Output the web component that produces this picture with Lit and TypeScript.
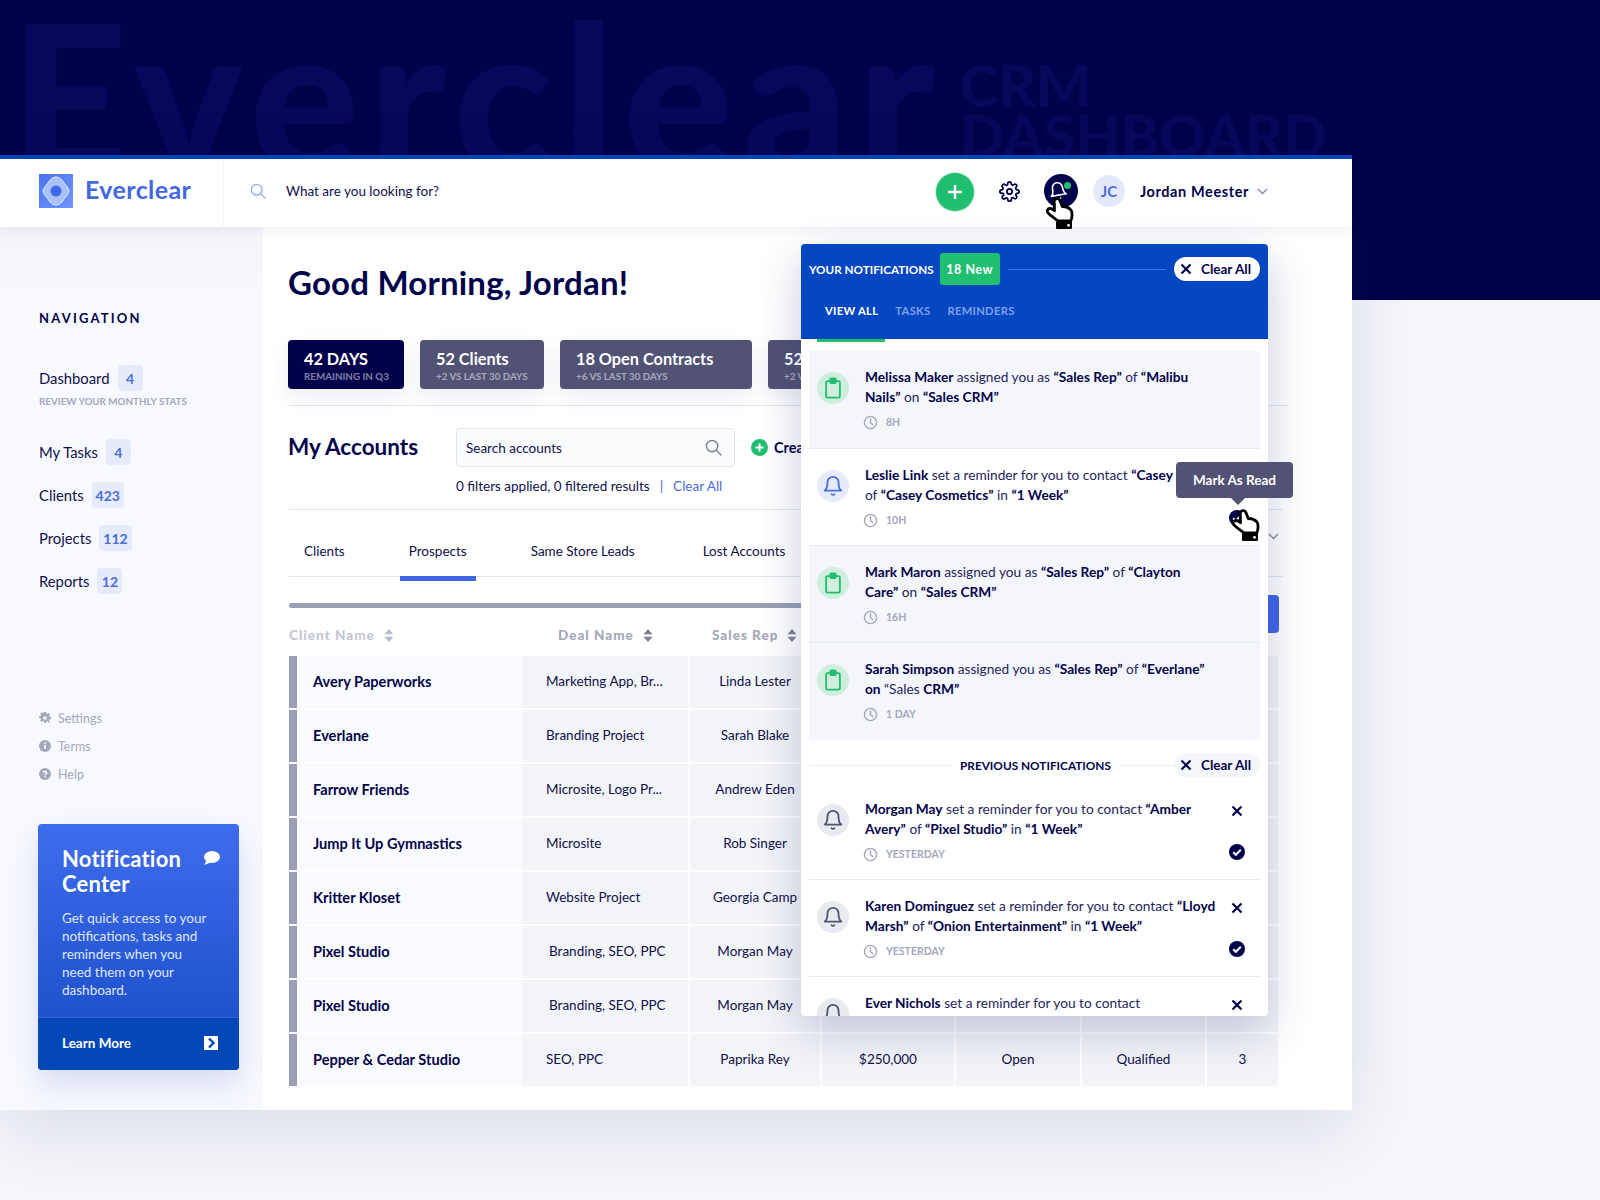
import { LitElement, html, css } from "lit";
import { customElement } from "lit/decorators.js";

const bell = (c: string, s = 22) => html`<svg width=${s} height=${s} viewBox="0 0 24 24" fill="none" stroke=${c} stroke-width="2" stroke-linecap="round" stroke-linejoin="round"><path d="M18 8a6 6 0 0 0-12 0c0 7-3 9-3 9h18s-3-2-3-9"/><path d="M10.5 21a2 2 0 0 0 3 0"/></svg>`;
const clip = html`<svg width="22" height="22" viewBox="0 0 24 24" fill="none" stroke="#20bf6f" stroke-width="2" stroke-linejoin="round"><rect x="4.5" y="4.5" width="15" height="18" rx="1.5"/><rect x="9" y="1.5" width="6" height="5" rx="1" fill="#20bf6f"/></svg>`;
const clock = html`<svg width="15" height="15" viewBox="0 0 16 16" fill="none" stroke="#a5a7bb" stroke-width="1.5" stroke-linecap="round"><circle cx="8" cy="8" r="6.5"/><path d="M8 4v4.3l2.4 2"/></svg>`;
const cross = (s = 12, c = "#02024a") => html`<svg width=${s} height=${s} viewBox="0 0 12 12" fill="none" stroke=${c} stroke-width="2.2"><path d="M1.5 1.5l9 9M10.5 1.5l-9 9"/></svg>`;
const check = html`<svg width="16" height="16" viewBox="0 0 16 16"><circle cx="8" cy="8" r="8" fill="#02024a"/><path d="M4.2 8.2l2.6 2.6 5-5" fill="none" stroke="#fff" stroke-width="2"/></svg>`;
const sort = (c: string) => html`<svg width="10" height="13" viewBox="0 0 10 13" fill=${c}><path d="M5 0l4.5 5.3H.5zM5 13L.5 7.7h9z"/></svg>`;
const magnifier = (c: string, s: number) => html`<svg width=${s} height=${s} viewBox="0 0 18 18" fill="none" stroke=${c} stroke-width="1.5" stroke-linecap="round"><circle cx="7.5" cy="7.5" r="6"/><path d="M12 12l5 5"/></svg>`;
const hand = html`<svg width="30" height="32" viewBox="0 0 30 32"><path d="M10 2.500c1.500-1.500 4-1 4.800.8l2.500 6.200c3.200 0 7 1.300 9 4 1.200 3 .8 7-.5 10.500H13c-3-2.500-8-5.500-10.300-8.500-1.200-2 .3-4.200 2.500-4 1.500.2 3 1 4.300 2.200L9.300 6c-.3-1.300-.2-2.500.7-3.500z" fill="#fff" stroke="#000" stroke-width="2.800" stroke-linejoin="round"/><rect x="11" y="24" width="16" height="8" rx="1" fill="#000"/><circle cx="23.500" cy="28.300" r="1.400" fill="#fff"/></svg>`;

type Note = { kind: "task" | "bell" | "old"; time: string; body: unknown; tint?: boolean };
const b = (t: string) => html`<b>${t}</b>`;

const fresh: Note[] = [
  { kind: "task", time: "8H", tint: true, body: html`${b("Melissa Maker")} assigned you as ${b("“Sales Rep”")} of ${b("“Malibu")}<br />${b("Nails”")} on ${b("“Sales CRM”")}` },
  { kind: "bell", time: "10H", body: html`${b("Leslie Link")} set a reminder for you to contact ${b("“Casey Miller”")}<br />of ${b("“Casey Cosmetics”")} in ${b("“1 Week”")}` },
  { kind: "task", time: "16H", tint: true, body: html`${b("Mark Maron")} assigned you as ${b("“Sales Rep”")} of ${b("“Clayton")}<br />${b("Care”")} on ${b("“Sales CRM”")}` },
  { kind: "task", time: "1 DAY", tint: true, body: html`${b("Sarah Simpson")} assigned you as ${b("“Sales Rep”")} of ${b("“Everlane”")}<br />${b("on")} “Sales ${b("CRM”")}` },
];
const old: Note[] = [
  { kind: "old", time: "YESTERDAY", body: html`${b("Morgan May")} set a reminder for you to contact ${b("“Amber")}<br />${b("Avery”")} of ${b("“Pixel Studio”")} in ${b("“1 Week”")}` },
  { kind: "old", time: "YESTERDAY", body: html`${b("Karen Dominguez")} set a reminder for you to contact ${b("“Lloyd")}<br />${b("Marsh”")} of ${b("“Onion Entertainment”")} in ${b("“1 Week”")}` },
  { kind: "old", time: "YESTERDAY", body: html`${b("Ever Nichols")} set a reminder for you to contact<br />${b("“Amber Avery”")}` },
];

const rows = [
  ["Avery Paperworks", "Marketing App, Br...", "Linda Lester"],
  ["Everlane", "Branding Project", "Sarah Blake"],
  ["Farrow Friends", "Microsite, Logo Pr...", "Andrew Eden"],
  ["Jump It Up Gymnastics", "Microsite", "Rob Singer"],
  ["Kritter Kloset", "Website Project", "Georgia Camp"],
  ["Pixel Studio", "Branding, SEO, PPC", "Morgan May"],
  ["Pixel Studio", "Branding, SEO, PPC", "Morgan May"],
  ["Pepper & Cedar Studio", "SEO, PPC", "Paprika Rey", "$250,000", "Open", "Qualified", "3"],
];

const nav = [["My Tasks", "4"], ["Clients", "423"], ["Projects", "112"], ["Reports", "12"]];

@customElement("app-root")
export class AppRoot extends LitElement {
  static styles = css`
    :host { display: block; height: 1200px; width: 1600px; overflow: hidden; position: relative; background: #f6f7fb; font-family: Lato, "Noto Sans", sans-serif; color: #10104a; font-size: 14px; }
    * { box-sizing: border-box; }
    b { font-weight: 700; color: #02024a; }
    .hero { height: 300px; background: #02024a; color: #08085a; font-weight: 900; }
    .wm { height: 155px; overflow: hidden; display: flex; align-items: flex-start; }
    .mark { font-size: 205px; line-height: 1; margin: -9px 0 0 10px; letter-spacing: 9.500px; white-space: nowrap; }
    .sub { font-size: 58px; line-height: 50px; margin: 60px 0 0 16px; white-space: nowrap; }
    .app { position: relative; width: 1352px; margin-top: -145px; border-top: 4px solid #0447b8; background: #fff; box-shadow: 0 24px 70px rgba(30, 40, 110, .12); }
    .head { height: 68px; padding-bottom: 4px; display: flex; align-items: center; background: #fff; position: relative; z-index: 2; box-shadow: 0 2px 12px rgba(30, 40, 110, .09); }
    .brand { width: 224px; height: 68px; margin-bottom: -4px; padding: 0 0 4px 39px; display: flex; align-items: center; gap: 12px; border-right: 1px solid #f3f4f8; font-size: 25px; font-weight: 700; color: #4268e0; letter-spacing: .4px; }
    .brand span { margin-top: -4px; }
    .find { flex: 1; display: flex; align-items: center; gap: 20px; padding-left: 26px; font-size: 13.500px; color: #10104a; }
    .plus { width: 38px; height: 38px; border-radius: 50%; background: #20bf6f; box-shadow: 0 0 0 1px #c8f0dc; display: flex; align-items: center; justify-content: center; margin-top: 2px; }
    .gear { margin-left: 25px; display: flex; }
    .ring { width: 34px; height: 34px; border-radius: 50%; background: #02024a; margin-left: 24px; display: flex; align-items: center; justify-content: center; position: relative; }
    .ring svg { transform: translateX(-3px) rotate(-10deg); }
    .dot { position: absolute; width: 7px; height: 7px; border-radius: 50%; background: #20bf6f; top: 8px; left: 20px; }
    .avatar { width: 32px; height: 32px; border-radius: 50%; background: #e3e9fb; color: #4a6ddc; font-weight: 700; font-size: 15px; display: flex; align-items: center; justify-content: center; margin-left: 15px; }
    .user { margin-left: 15px; font-weight: 700; font-size: 14.500px; letter-spacing: .6px; color: #02024a; white-space: nowrap; }
    .chev { margin: 0 84px 0 8px; display: flex; }
    .body { display: grid; grid-template-columns: 263px 1089px; height: 883px; }
    .side { background: linear-gradient(#f4f5fa, #f8f9fe 80px); padding: 83px 0 0 39px; display: flex; flex-direction: column; }
    .navt { font-size: 13px; line-height: 16px; font-weight: 700; letter-spacing: 2.200px; color: #02024a; }
    .item { display: flex; align-items: center; gap: 8px; height: 26px; font-size: 14.800px; color: #10104a; }
    .item.first { margin-top: 39px; }
    .tag { min-width: 25px; height: 26px; padding: 0 4px; border-radius: 4px; background: #e6ebfb; color: #4a6ddc; display: flex; align-items: center; justify-content: center; font-size: 14px; font-weight: 700; }
    .hint { font-size: 9.800px; line-height: 12px; margin-top: 4px; font-weight: 700; color: #a5a7bb; white-space: nowrap; }
    .links { margin-top: 32px; display: flex; flex-direction: column; gap: 17px; }
    .foot { margin-top: 110px; display: flex; flex-direction: column; }
    .foot div { height: 28px; display: flex; align-items: center; gap: 7px; font-size: 12.500px; color: #a5a7bb; }
    .promo { margin: 36px 0 0 -1px; width: 201px; height: 246px; border-radius: 4px; overflow: hidden; background: linear-gradient(#3f6cec, #174bc4); box-shadow: 0 14px 30px rgba(30, 60, 160, .15); color: #fff; display: flex; flex-direction: column; }
    .pbody { flex: 1; padding: 22px 0 0 24px; position: relative; }
    .ptitle { font-size: 22px; line-height: 25px; font-weight: 700; letter-spacing: .2px; }
    .pchat { position: absolute; left: 165px; top: 27px; display: flex; }
    .ptext { margin-top: 13px; font-size: 13.500px; line-height: 18px; color: #dfe7fd; }
    .pfoot { height: 53px; background: #0447b8; border-top: 1px solid #2e63d8; padding: 0 21px 3px 24px; display: flex; align-items: center; justify-content: space-between; font-size: 13.500px; font-weight: 700; }
    .main { background: #fff; padding: 35px 64px 0 25px; position: relative; }
    h1 { margin: 0; font-size: 33px; line-height: 40px; font-weight: 700; color: #02024a; letter-spacing: .2px; }
    .stats { margin-top: 38px; display: grid; grid-template-columns: 116px 124px 192px 150px; gap: 16px; }
    .stat { height: 49px; border-radius: 4px; background: #525275; color: #fff; padding: 9px 0 0 16px; white-space: nowrap; overflow: hidden; box-shadow: 0 8px 20px rgba(30, 40, 110, .08); }
    .stat.on { background: #02024a; }
    .stat strong { display: block; font-size: 16.300px; line-height: 20px; font-weight: 700; }
    .stat span { display: block; font-size: 9.800px; line-height: 12px; margin-top: 1px; font-weight: 700; color: rgba(255, 255, 255, .5); }
    .rule { height: 1px; background: #e3e5ec; margin-top: 16px; margin-left: 1px; }
    .acct { margin: 22px 5px 0 0; display: grid; grid-template-columns: 168px 279px auto; }
    h2 { margin: 0; font-size: 22.500px; line-height: 38px; font-weight: 700; color: #02024a; }
    .sbox { height: 39px; border: 1px solid #e3e5ec; border-radius: 4px; background: #fafbfd; padding: 0 12px 0 9px; display: flex; align-items: center; justify-content: space-between; font-size: 13.500px; }
    .create { margin-left: 16px; display: flex; align-items: center; gap: 6px; font-weight: 700; font-size: 14.500px; color: #02024a; white-space: nowrap; }
    .filt { grid-column: 2 / 4; margin-top: 11px; line-height: 16px; font-size: 13.500px; display: flex; gap: 10px; white-space: nowrap; }
    .filt a { color: #4a6ddc; }
    .filt i { font-style: normal; color: #4a6ddc; }
    .tabs { margin: 15px 5px 0 1px; height: 68px; border-top: 1px solid #e3e5ec; border-bottom: 1px solid #e3e5ec; display: flex; gap: 46px; padding-left: 6px; font-size: 13.500px; }
    .tab { height: 71px; padding: 33px 9px 0; line-height: 16px; white-space: nowrap; }
    .tab.on { border-bottom: 5px solid #3f67e0; }
    .tab.end { margin-left: 4px; }
    .bar { margin: 26px 10px 0 1px; height: 5px; border-radius: 3px; background: #9a9fb5; }
    .thead { height: 48px; padding-top: 6px; display: grid; grid-template-columns: 233px 166px 132px; align-items: center; font-size: 13.500px; font-weight: 900; letter-spacing: 1px; color: #a5a7bb; white-space: nowrap; margin-left: 1px; }
    .th { display: flex; align-items: center; gap: 9px; }
    .th.one { color: #c5c7d5; }
    .th.two { padding-left: 36px; }
    .th.three { padding-left: 24px; }
    .grid { display: grid; grid-template-columns: 233px 166px 132px 134px 126px 125px 73px; row-gap: 2px; margin-left: 1px; width: 989px; }
    .cell { height: 52px; padding-bottom: 2px; background: #f3f4f8; background-clip: padding-box; border-left: 2px solid #fff; display: flex; align-items: center; justify-content: center; font-size: 13.500px; white-space: nowrap; }
    .cell.name { background: #fafbfe; border-left: 8px solid #9a9fb5; justify-content: flex-start; padding-left: 16px; font-weight: 700; font-size: 14.600px; color: #02024a; }
    .cell.deal { border-left: 0; justify-content: flex-start; padding-left: 24px; }
    .cell.deal.inset { padding-left: 27px; }
    .ghost { position: absolute; left: 1005px; top: 306px; display: flex; }
    .cta { position: absolute; left: 960px; top: 368px; width: 56px; height: 38px; background: #3f67e8; border-radius: 0 4px 4px 0; }
    .panel { position: absolute; left: 801px; top: 85px; width: 467px; height: 772px; background: #fff; border-radius: 4px; overflow: hidden; box-shadow: 0 16px 44px rgba(30, 40, 110, .24); z-index: 3; }
    .ptop { height: 95px; background: #0447c0; color: #fff; }
    .pline { height: 52px; padding: 0 8px 2px; display: flex; align-items: center; white-space: nowrap; }
    .pname { font-size: 11.700px; font-weight: 700; }
    .pnew { margin-left: 6px; width: 60px; height: 32px; background: #20bf6f; border-radius: 3px; display: flex; align-items: center; justify-content: center; font-size: 12.500px; font-weight: 700; letter-spacing: .5px; }
    .pline hr { flex: 1; border: 0; height: 1px; margin: 0 8px; background: #3f6fe8; }
    .pill { width: 86px; height: 24px; padding-right: 3px; border-radius: 12px; display: flex; align-items: center; justify-content: center; gap: 9px; font-size: 13.500px; font-weight: 700; color: #02024a; background: #fff; white-space: nowrap; }
    .pill.soft { background: #f5f6fb; }
    .ptabs { display: flex; padding: 8px 0 0 24px; gap: 17px; font-size: 11.200px; font-weight: 700; letter-spacing: .3px; color: #7fa0ee; line-height: 14px; }
    .ptabs .on { color: #fff; }
    .pgreen { width: 68px; height: 3px; margin-left: 16px; background: #20bf6f; }
    .list { margin: 9px 8px 0; }
    .note { height: 97px; display: grid; grid-template-columns: 32px 16px 1fr 24px; padding: 16px 11px 0 8px; border-bottom: 1px solid #e8eaf1; position: relative; }
    .note.tint { background: #f5f6fb; }
    .note.top { height: 98px; }
    .note.last { border-bottom: 0; }
    .circle { grid-column: 1; width: 32px; height: 32px; border-radius: 50%; margin-top: 5px; display: flex; align-items: center; justify-content: center; }
    .circle.task { background: #cfeedd; }
    .circle.bell { background: #e6ebfb; }
    .circle.old { background: #e9e9f0; }
    .txt { grid-column: 3; font-size: 13.700px; line-height: 20px; white-space: nowrap; color: #25255c; }
    .when { margin: 8px 0 0 -2px; height: 14px; display: flex; align-items: center; gap: 8px; font-size: 10.500px; font-weight: 700; color: #a5a7bb; }
    .acts { grid-column: 4; display: flex; flex-direction: column; align-items: center; padding-top: 6px; }
    .acts .ok { margin-top: 27px; display: flex; }
    .spacer { height: 12px; }
    .prev { height: 43px; display: flex; align-items: center; padding-top: 7px; }
    .prev hr { flex: 1; border: 0; height: 1px; background: #ecedf3; margin: 0; }
    .prev hr.lead { flex: 0 0 143px; }
    .prev span { padding: 0 8px; font-size: 11.800px; font-weight: 700; color: #02024a; white-space: nowrap; }
    .tip { position: absolute; left: 1176px; top: 303px; width: 117px; height: 36px; background: #525275; border-radius: 4px; color: #fff; font-size: 13.500px; font-weight: 700; display: flex; align-items: center; justify-content: center; z-index: 4; }
    .tip::after { content: ""; position: absolute; left: 55px; top: 36px; border: 7px solid transparent; border-top-color: #525275; border-bottom: 0; }
    .hand { position: absolute; z-index: 5; display: flex; }
    .hand.a { left: 1045px; top: 38px; }
    .hand.b { left: 1231px; top: 350px; }
  `;

  note(n: Note, cls = "") {
    return html`<div class="note ${n.tint ? "tint" : ""} ${cls}">
      <div class="circle ${n.kind}">${n.kind === "task" ? clip : bell(n.kind === "bell" ? "#4a6ddc" : "#525275")}</div>
      <div class="txt">${n.body}<div class="when">${clock}<span>${n.time}</span></div></div>
      ${n.kind === "old" ? html`<div class="acts">${cross()}<div class="ok">${check}</div></div>` : n.time === "10H" ? html`<div class="acts"><div class="spacer"></div><div class="ok">${check}</div></div>` : ""}
    </div>`;
  }

  render() {
    return html`
      <div class="hero"><div class="wm"><div class="mark">Everclear</div><div class="sub">CRM<br />DASHBOARD</div></div></div>
      <div class="app">
        <div class="head">
          <div class="brand">
            <svg width="34" height="34" viewBox="0 0 34 34"><defs><linearGradient id="lg" x1="0" y1="0" x2="1" y2="1"><stop offset="0" stop-color="#4a74ee"/><stop offset="1" stop-color="#6f95ff"/></linearGradient></defs><rect width="34" height="34" fill="url(#lg)"/><path d="M17 3c4 0 6 3 8.500 6.500C28 13 30 15 30 17s-2 4-4.500 7.500C23 28 21 31 17 31s-6-3-8.500-6.500C6 21 4 19 4 17s2-4 4.500-7.500C11 6 13 3 17 3z" fill="#a9c0fa" stroke="#e6edff" stroke-width="1"/><circle cx="17" cy="17" r="5.500" fill="#3f67e8"/></svg>
            <span>Everclear</span>
          </div>
          <div class="find">${magnifier("#8fabec", 16)}<span>What are you looking for?</span></div>
          <div class="plus"><svg width="18" height="18" viewBox="0 0 18 18" stroke="#fff" stroke-width="2.400"><path d="M9 2v14M2 9h14"/></svg></div>
          <div class="gear"><svg width="21" height="21" viewBox="0 0 24 24" fill="none" stroke="#02024a" stroke-width="2" stroke-linejoin="round"><circle cx="12" cy="12" r="3"/><path d="M19.400 15a1.650 1.650 0 0 0 .33 1.820l.06.06a2 2 0 1 1-2.830 2.830l-.06-.06a1.650 1.650 0 0 0-2.820 1.170V21a2 2 0 1 1-4 0v-.09a1.650 1.650 0 0 0-2.820-1.110l-.06.06a2 2 0 1 1-2.830-2.830l.06-.06A1.650 1.650 0 0 0 3 14H3a2 2 0 1 1 0-4h.09a1.650 1.650 0 0 0 1.170-2.820l-.06-.06a2 2 0 1 1 2.830-2.830l.06.06A1.650 1.650 0 0 0 10 3.090V3a2 2 0 1 1 4 0v.09a1.650 1.650 0 0 0 2.820 1.170l.06-.06a2 2 0 1 1 2.830 2.830l-.06.06A1.650 1.650 0 0 0 21 10h0a2 2 0 1 1 0 4h-.09a1.650 1.650 0 0 0-1.510 1z"/></svg></div>
          <div class="ring">${bell("#fff", 20)}<span class="dot"></span></div>
          <div class="avatar">JC</div>
          <div class="user">Jordan Meester</div>
          <div class="chev"><svg width="11" height="7" viewBox="0 0 11 7" fill="none" stroke="#8c8fa8" stroke-width="1.500"><path d="M1 1l4.500 4.500L10 1"/></svg></div>
        </div>
        <div class="body">
          <aside class="side">
            <div class="navt">NAVIGATION</div>
            <div class="item first"><span>Dashboard</span><span class="tag">4</span></div>
            <div class="hint">REVIEW YOUR MONTHLY STATS</div>
            <div class="links">${nav.map(([l, c]) => html`<div class="item"><span>${l}</span><span class="tag">${c}</span></div>`)}</div>
            <div class="foot">
              <div><svg width="12" height="12" viewBox="0 0 24 24" fill="#a5a7bb"><path d="M10 1h4l.7 3.200 2.300 1 2.800-1.800 2.800 2.800L21 9l1 2.300 3 .7v4l-3.200.7-1 2.300 1.800 2.800-2.800 2.800L17 21l-2.300 1-.7 3h-4l-.7-3.200-2.300-1-2.800 1.800-2.800-2.800L3 17l-1-2.300L-1 14v-4l3.200-.7 1-2.300L1.400 4.200 4.200 1.400 7 3l2.300-1z" transform="translate(1.200 -1) scale(.92)"/><circle cx="12" cy="12" r="3.500" fill="#f8f9fe"/></svg>Settings</div>
              <div><svg width="12" height="12" viewBox="0 0 12 12"><circle cx="6" cy="6" r="6" fill="#a5a7bb"/><path d="M6 5v4M6 2.600v1.200" stroke="#fff" stroke-width="1.600"/></svg>Terms</div>
              <div><svg width="12" height="12" viewBox="0 0 12 12"><circle cx="6" cy="6" r="6" fill="#a5a7bb"/><path d="M4.300 4.600C4.400 3.200 7.800 3 7.800 4.800 7.800 6 6 6 6 7.200M6 8.300v1.300" stroke="#fff" stroke-width="1.400" fill="none"/></svg>Help</div>
            </div>
            <div class="promo">
              <div class="pbody">
                <div class="ptitle">Notification<br />Center</div>
                <div class="pchat"><svg width="17" height="14" viewBox="0 0 17 14" fill="#fff"><ellipse cx="9" cy="6" rx="8" ry="6"/><path d="M4 9l-3 5 7-2.500z"/></svg></div>
                <div class="ptext">Get quick access to your<br />notifications, tasks and<br />reminders when you<br />need them on your<br />dashboard.</div>
              </div>
              <div class="pfoot"><span>Learn More</span><svg width="14" height="14" viewBox="0 0 14 14"><rect width="14" height="14" fill="#fff"/><path d="M5 2.500L9.500 7 5 11.500" fill="none" stroke="#0447b8" stroke-width="2.400"/></svg></div>
            </div>
          </aside>
          <main class="main">
            <h1>Good Morning, Jordan!</h1>
            <div class="stats">
              <div class="stat on"><strong>42 DAYS</strong><span>REMAINING IN Q3</span></div>
              <div class="stat"><strong>52 Clients</strong><span>+2 VS LAST 30 DAYS</span></div>
              <div class="stat"><strong>18 Open Contracts</strong><span>+6 VS LAST 30 DAYS</span></div>
              <div class="stat"><strong>52 Clients</strong><span>+2 VS LAST 30 DAYS</span></div>
            </div>
            <div class="rule"></div>
            <div class="acct">
              <h2>My Accounts</h2>
              <div class="sbox"><span>Search accounts</span>${magnifier("#7d8096", 17)}</div>
              <div class="create"><svg width="17" height="17" viewBox="0 0 17 17"><circle cx="8.500" cy="8.500" r="8.500" fill="#20bf6f"/><path d="M8.500 4.500v8M4.500 8.500h8" stroke="#fff" stroke-width="2"/></svg>Create Account</div>
              <div class="filt"><span>0 filters applied, 0 filtered results</span><i>|</i><a>Clear All</a></div>
            </div>
            <div class="tabs">
              <div class="tab">Clients</div><div class="tab on">Prospects</div><div class="tab">Same Store Leads</div><div class="tab end">Lost Accounts</div>
            </div>
            <div class="bar"></div>
            <div class="thead">
              <div class="th one">Client Name ${sort("#b9bccd")}</div>
              <div class="th two">Deal Name ${sort("#7d8096")}</div>
              <div class="th three">Sales Rep ${sort("#7d8096")}</div>
            </div>
            <div class="grid">
              ${rows.map((r) => html`
                <div class="cell name">${r[0]}</div>
                <div class="cell deal ${r[1].startsWith("Branding,") ? "inset" : ""}">${r[1]}</div>
                <div class="cell">${r[2]}</div>
                <div class="cell">${r[3] ?? ""}</div>
                <div class="cell">${r[4] ?? ""}</div>
                <div class="cell">${r[5] ?? ""}</div>
                <div class="cell">${r[6] ?? ""}</div>`)}
            </div>
            <div class="ghost"><svg width="11" height="7" viewBox="0 0 11 7" fill="none" stroke="#8c8fa8" stroke-width="1.500"><path d="M1 1l4.500 4.500L10 1"/></svg></div>
            <div class="cta"></div>
          </main>
        </div>
        <section class="panel">
          <div class="ptop">
            <div class="pline"><span class="pname">YOUR NOTIFICATIONS</span><span class="pnew">18 New</span><hr /><span class="pill">${cross()}Clear All</span></div>
            <div class="ptabs"><span class="on">VIEW ALL</span><span>TASKS</span><span>REMINDERS</span></div>
          </div>
          <div class="pgreen"></div>
          <div class="list">
            ${fresh.map((n, i) => this.note(n, i === 0 ? "top" : i === 3 ? "last" : ""))}
            <div class="prev"><hr class="lead" /><span>PREVIOUS NOTIFICATIONS</span><hr /><div class="pill soft">${cross()}Clear All</div></div>
            ${old.map((n) => this.note(n))}
          </div>
        </section>
        <div class="tip">Mark As Read</div>
        <div class="hand a">${hand}</div>
        <div class="hand b">${hand}</div>
      </div>
    `;
  }
}
